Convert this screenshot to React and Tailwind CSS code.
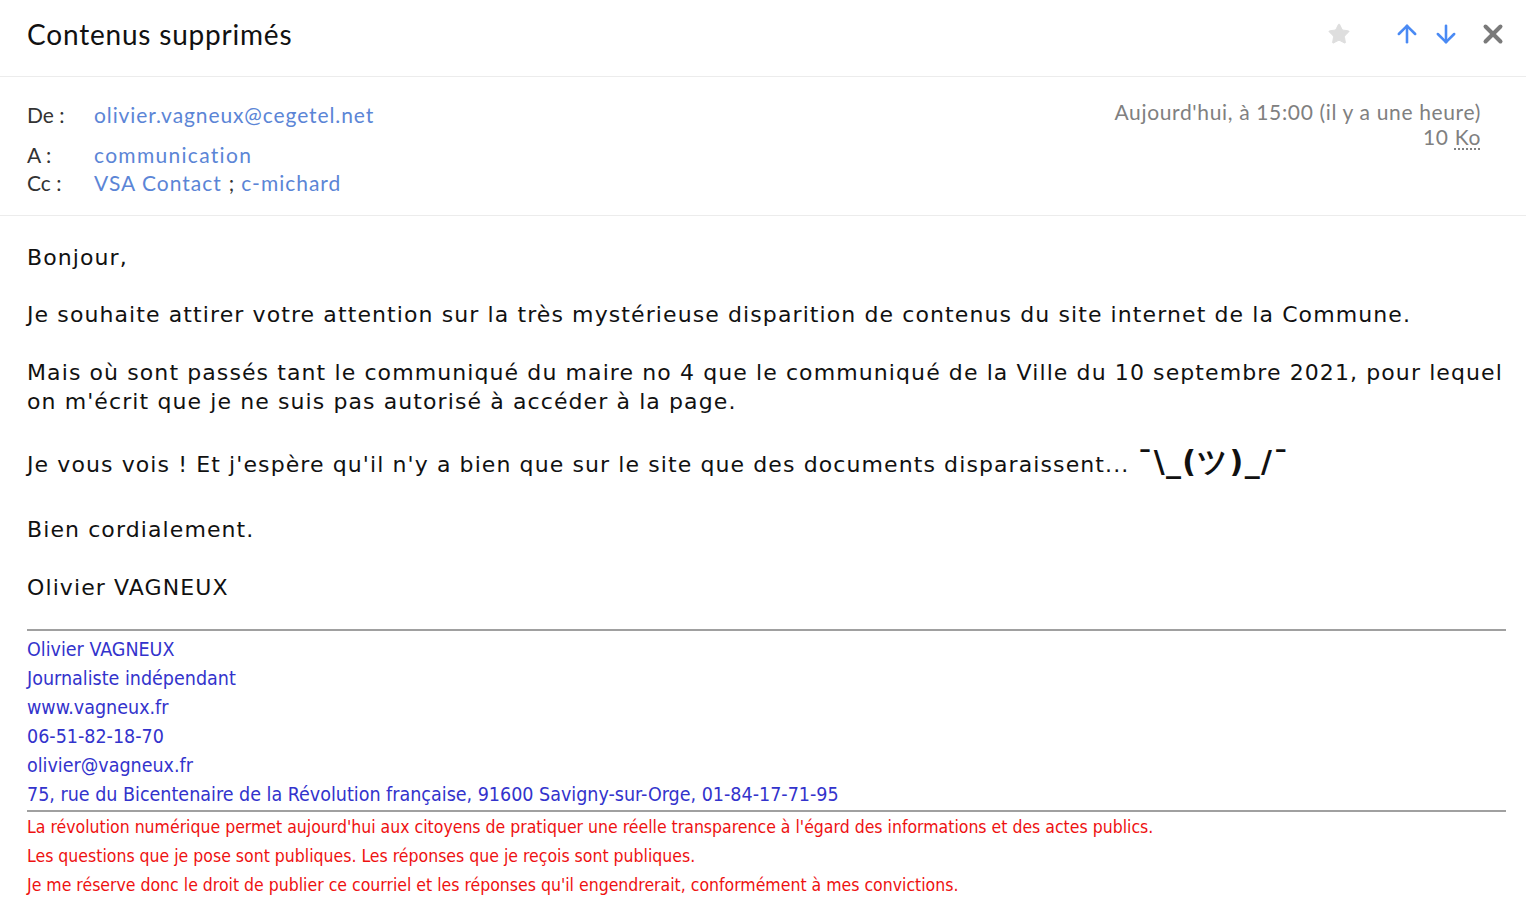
import { ArrowUp, ArrowDown, X, Star } from 'lucide-react';

function App() {
  return (
    <div className="min-h-screen bg-white w-[1526px] text-[#222]">
      {/* Subject bar */}
      <header className="h-[77px] flex items-center justify-between pl-[27px] pr-[18px] pb-[8px] border-b border-[#ececec]">
        <h1 className="text-[28px] text-[#111] [font-family:Lato,sans-serif] tracking-[0.8px]">Contenus supprimés</h1>
        <div className="flex items-center">
          <Star size={24} className="text-[#dedede] mr-[42px]" fill="#dedede" strokeWidth={1} />
          <ArrowUp size={28} className="text-[#4a8af4] mr-[11px]" strokeWidth={2.2} />
          <ArrowDown size={28} className="text-[#4a8af4] mr-[18px]" strokeWidth={2.2} />
          <X size={30} className="text-[#7a7a7a]" strokeWidth={3.2} />
        </div>
      </header>

      {/* Meta */}
      <section className="flex justify-between pl-[27px] pr-[45px] pt-[22px] pb-[18px] border-b border-[#ececec] [font-family:Lato,sans-serif] text-[21px]">
        <div className="flex flex-col">
          <div className="flex h-[32px] items-center">
            <span className="w-[67px] text-[#333]">De :</span>
            <span className="text-[#5b85d6] tracking-[0.9px]">olivier.vagneux@cegetel.net</span>
          </div>
          <div className="flex h-[28px] items-center mt-[10px]">
            <span className="w-[67px] text-[#333]">A :</span>
            <span className="text-[#5b85d6] tracking-[1.3px]">communication</span>
          </div>
          <div className="flex h-[28px] items-center">
            <span className="w-[67px] text-[#333]">Cc :</span>
            <span className="text-[#5b85d6] tracking-[1px]">VSA Contact</span>
            <span className="text-[#333] mx-[7px]">;</span>
            <span className="text-[#5b85d6] tracking-[1px]">c-michard</span>
          </div>
        </div>
        <div className="flex flex-col items-end text-[#808080] leading-[25px] tracking-[0.65px]">
          <span>Aujourd'hui, à 15:00 (il y a une heure)</span>
          <span>
            10 <abbr className="underline decoration-dotted underline-offset-[3px]" title="kilo-octets">Ko</abbr>
          </span>
        </div>
      </section>

      {/* Body */}
      <main className="pl-[27px] pr-[20px] pt-[27px] [font-family:'DejaVu_Sans',Verdana,sans-serif] text-[22px] tracking-[1.1px] leading-[29px] text-[#111]">
        <p>Bonjour,</p>
        <p className="mt-[28px]">Je souhaite attirer votre attention sur la très mystérieuse disparition de contenus du site internet de la Commune.</p>
        <p className="mt-[29px]">
          Mais où sont passés tant le communiqué du maire no 4 que le communiqué de la Ville du 10 septembre 2021, pour lequel on m'écrit que je ne suis pas autorisé à accéder à la page.
        </p>
        <p className="mt-[31px] leading-[29px]">
          Je vous vois ! Et j'espère qu'il n'y a bien que sur le site que des documents disparaissent... <span className="text-[30px] leading-[29px] font-bold tracking-[1.3px]">¯\_(ツ)_/¯</span>
        </p>
        <p className="mt-[36px]">Bien cordialement.</p>
        <p className="mt-[29px]">Olivier VAGNEUX</p>

        {/* Signature */}
        <div className="mt-[27px] border-t-2 border-[#a0a0a0] pt-[4px] [font-family:'DejaVu_Sans_Condensed','DejaVu_Sans',sans-serif] text-[19.5px] tracking-normal text-[#3333cc]">
          <div className="leading-[29px]">Olivier VAGNEUX</div>
          <div className="leading-[29px]">Journaliste indépendant</div>
          <div className="leading-[29px]">www.vagneux.fr</div>
          <div className="leading-[29px]">06-51-82-18-70</div>
          <div className="leading-[29px]">olivier@vagneux.fr</div>
          <div className="leading-[29px] border-b-2 border-[#a0a0a0] pb-[1px]">
            75, rue du Bicentenaire de la Révolution française, 91600 Savigny-sur-Orge, 01-84-17-71-95
          </div>
          <div className="text-[17.5px] text-[#ee1111] leading-[29px] pt-[1px]">
            <div>La révolution numérique permet aujourd'hui aux citoyens de pratiquer une réelle transparence à l'égard des informations et des actes publics.</div>
            <div>Les questions que je pose sont publiques. Les réponses que je reçois sont publiques.</div>
            <div>Je me réserve donc le droit de publier ce courriel et les réponses qu'il engendrerait, conformément à mes convictions.</div>
          </div>
        </div>
      </main>
    </div>
  );
}

export default App;
